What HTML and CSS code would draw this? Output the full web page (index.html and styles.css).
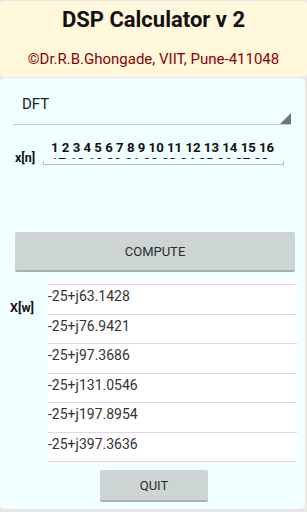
FILE: index.html
```html
<!DOCTYPE html>
<html lang="en">
<head>
    <meta charset="UTF-8">
    <meta name="viewport" content="width=device-width, initial-scale=1.0">
    <title>DSP Calculator v 2</title>
    <link rel="stylesheet" href="styles.css">
</head>
<body>
    <div class="header">
        <h1 class="title">DSP Calculator v 2</h1>
        <div class="credit">©Dr.R.B.Ghongade, VIIT, Pune-411048</div>
    </div>

    <div class="panel">
        <div class="spinner">
            <span class="spinner-text">DFT</span>
            <span class="spinner-arrow"></span>
        </div>

        <div class="input-row">
            <span class="label">x[n]</span>
            <div class="edit">
                <div class="edit-text">1 2 3 4 5 6 7 8 9 10 11 12 13 14 15 16 17 18 19 20 21 22 23 24 25 26 27 28</div>
            </div>
        </div>

        <button class="btn compute">COMPUTE</button>

        <div class="output-row">
            <span class="label out-label">X[w]</span>
            <ul class="results">
                <li>-25+j63.1428</li>
                <li>-25+j76.9421</li>
                <li>-25+j97.3686</li>
                <li>-25+j131.0546</li>
                <li>-25+j197.8954</li>
                <li>-25+j397.3636</li>
            </ul>
        </div>

        <button class="btn quit">QUIT</button>
    </div>
</body>
</html>
```

FILE: styles.css
```css
* {
    margin: 0;
    padding: 0;
    box-sizing: border-box;
    font-family: Roboto, "Liberation Sans", sans-serif;
}

body {
    background: #e9e7e4;
    width: 307px;
    height: 512px;
    overflow: hidden;
}

.header {
    background: #fff8dc;
    height: 76px;
    margin-top: 1px;
    border-radius: 4px;
    text-align: center;
}

.title {
    font-size: 22px;
    font-weight: bold;
    color: #111;
    line-height: 26px;
    padding-top: 6px;
}

.credit {
    font-size: 15px;
    color: #8b0000;
    line-height: 18px;
    padding-top: 17px;
}

.panel {
    background: #f0ffff;
    width: 305px;
    height: 431px;
    margin-top: 1px;
    border-radius: 5px;
    display: flex;
    flex-direction: column;
}

.spinner {
    margin: 0 14px 0 13px;
    height: 47px;
    border-bottom: 1px solid #c9cccc;
    display: flex;
    justify-content: space-between;
    align-items: flex-end;
}

.spinner-text {
    font-size: 15px;
    color: #222;
    padding: 0 0 11px 9px;
}

.spinner-arrow {
    width: 0;
    height: 0;
    border-left: 11px solid transparent;
    border-bottom: 11px solid #757777;
}

.input-row {
    display: flex;
    align-items: flex-start;
    margin-top: 13px;
}

.label {
    font-size: 12.5px;
    font-weight: bold;
    color: #111;
}

.input-row .label {
    width: 43px;
    padding: 12px 0 0 15px;
}

.edit {
    width: 241px;
    height: 27px;
    border: 1px solid #b8bcbc;
    border-top: none;
    position: relative;
}

.edit::before {
    content: "";
    position: absolute;
    left: -1px;
    right: -1px;
    top: 0;
    height: 23px;
    background: #f0ffff;
}

.edit-text {
    position: relative;
    margin-left: 7px;
    height: 21px;
    overflow: hidden;
    font-size: 13.2px;
    font-weight: bold;
    color: #111;
    line-height: 15px;
    padding-top: 2px;
}

.btn {
    border: none;
    background: #cdd5d4;
    border-bottom: 2px solid #a9b1b0;
    border-radius: 2px;
    font-size: 13px;
    color: #2a2a2a;
    cursor: pointer;
}

.compute {
    margin: 67px 0 0 15px;
    width: 280px;
    height: 40px;
}

.output-row {
    display: flex;
    margin-top: 8px;
}

.out-label {
    width: 48px;
    padding: 20px 0 0 10px;
}

.results {
    list-style: none;
    width: 249px;
    background: #fff;
    padding-top: 4px;
}

.results li {
    height: 29.6px;
    border-top: 1px solid #e2d6e6;
    font-size: 14px;
    color: #333;
    line-height: 18px;
    padding-top: 2px;
}

.results li:last-child {
    border-bottom: 1px solid #e2d6e6;
    height: 30.2px;
}

.quit {
    margin: 8px 0 0 100px;
    width: 108px;
    height: 32px;
}
```
